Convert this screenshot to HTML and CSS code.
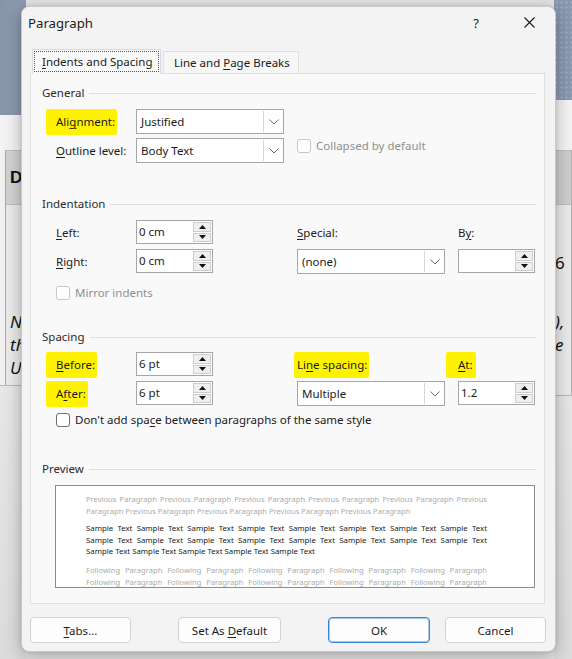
FILE: index.html
```html
<!DOCTYPE html>
<html>
<head>
<meta charset="utf-8">
<title>Paragraph</title>
<link rel="stylesheet" href="styles.css">
</head>
<body>
<div class="desk">
  <div class="strip strip-left">
    <div class="bg-top-l"></div>
    <div class="bg-light-l"></div>
    <div class="tbl-l">
      <div class="th-l">D</div>
      <div class="td-l"><span class="it">N</span><span class="it">th</span><span class="it">U</span></div>
    </div>
    <div class="bg-bottom"></div>
  </div>
  <div class="strip strip-right">
    <div class="bg-top-r"></div>
    <div class="bg-light-r"></div>
    <div class="tbl-r">
      <div class="th-r"></div>
      <div class="td-r"><span class="num">6</span><span class="it it-gap">),</span><span class="it">e</span></div>
    </div>
    <div class="bg-bottom"></div>
  </div>
</div>

<div class="dialog">
  <div class="titlebar">
    <span class="title">Paragraph</span>
    <span class="help">?</span>
    <span class="close"><svg width="11" height="11" viewBox="0 0 11 11"><path d="M0.5 0.5L10.5 10.5M10.5 0.5L0.5 10.5" stroke="#1b1b1b" stroke-width="1.1" fill="none"/></svg></span>
  </div>

  <div class="tabs">
    <div class="tab tab-active"><span class="focus"><span><u>I</u>ndents and Spacing</span></span></div>
    <div class="tab tab-inactive"><span>Line and <u>P</u>age Breaks</span></div>
  </div>

  <div class="panel">
    <div class="legend">General</div>
    <div class="grid grid-general">
      <div class="lbl"><span class="hl hl-align">Ali<u>g</u>nment:</span></div>
      <div class="select"><span class="sel-val">Justified</span><span class="sel-btn"><svg width="10" height="6" viewBox="0 0 10 6"><path d="M0.5 0.5L5 5L9.5 0.5" fill="none" stroke="#6b6b6b" stroke-width="1"/></svg></span></div>
      <div></div>
      <div></div>
      <div class="lbl"><u>O</u>utline level:</div>
      <div class="select"><span class="sel-val">Body Text</span><span class="sel-btn"><svg width="10" height="6" viewBox="0 0 10 6"><path d="M0.5 0.5L5 5L9.5 0.5" fill="none" stroke="#6b6b6b" stroke-width="1"/></svg></span></div>
      <div></div>
      <div class="check disabled"><span class="box"></span><span>Collapsed by default</span></div>
    </div>

    <div class="legend legend-gap">Indentation</div>
    <div class="grid grid-six">
      <div class="lbl"><u>L</u>eft:</div>
      <div class="spin"><span class="spin-val">0 cm</span><span class="spin-btns"><span class="spin-btn"><svg width="7" height="4" viewBox="0 0 7 4"><path d="M3.5 0L7 4H0z" fill="#111"/></svg></span><span class="spin-btn"><svg width="7" height="4" viewBox="0 0 7 4"><path d="M0 0H7L3.5 4z" fill="#111"/></svg></span></span></div>
      <div></div>
      <div class="lbl"><u>S</u>pecial:</div>
      <div></div>
      <div class="lbl">B<u>y</u>:</div>

      <div class="lbl"><u>R</u>ight:</div>
      <div class="spin"><span class="spin-val">0 cm</span><span class="spin-btns"><span class="spin-btn"><svg width="7" height="4" viewBox="0 0 7 4"><path d="M3.5 0L7 4H0z" fill="#111"/></svg></span><span class="spin-btn"><svg width="7" height="4" viewBox="0 0 7 4"><path d="M0 0H7L3.5 4z" fill="#111"/></svg></span></span></div>
      <div></div>
      <div class="select"><span class="sel-val">(none)</span><span class="sel-btn"><svg width="10" height="6" viewBox="0 0 10 6"><path d="M0.5 0.5L5 5L9.5 0.5" fill="none" stroke="#6b6b6b" stroke-width="1"/></svg></span></div>
      <div></div>
      <div class="spin"><span class="spin-val"></span><span class="spin-btns"><span class="spin-btn"><svg width="7" height="4" viewBox="0 0 7 4"><path d="M3.5 0L7 4H0z" fill="#111"/></svg></span><span class="spin-btn"><svg width="7" height="4" viewBox="0 0 7 4"><path d="M0 0H7L3.5 4z" fill="#111"/></svg></span></span></div>
    </div>
    <div class="check disabled row-mirror"><span class="box"></span><span>Mirror indents</span></div>

    <div class="legend legend-gap2">Spacing</div>
    <div class="grid grid-six grid-spacing">
      <div class="lbl"><span class="hl hl-before"><u>B</u>efore:</span></div>
      <div class="spin"><span class="spin-val">6 pt</span><span class="spin-btns"><span class="spin-btn"><svg width="7" height="4" viewBox="0 0 7 4"><path d="M3.5 0L7 4H0z" fill="#111"/></svg></span><span class="spin-btn"><svg width="7" height="4" viewBox="0 0 7 4"><path d="M0 0H7L3.5 4z" fill="#111"/></svg></span></span></div>
      <div></div>
      <div class="lbl"><span class="hl hl-line">Li<u>n</u>e spacing:</span></div>
      <div></div>
      <div class="lbl"><span class="hl hl-at"><u>A</u>t:</span></div>

      <div class="lbl"><span class="hl hl-after">A<u>f</u>ter:</span></div>
      <div class="spin"><span class="spin-val">6 pt</span><span class="spin-btns"><span class="spin-btn"><svg width="7" height="4" viewBox="0 0 7 4"><path d="M3.5 0L7 4H0z" fill="#111"/></svg></span><span class="spin-btn"><svg width="7" height="4" viewBox="0 0 7 4"><path d="M0 0H7L3.5 4z" fill="#111"/></svg></span></span></div>
      <div></div>
      <div class="select"><span class="sel-val">Multiple</span><span class="sel-btn"><svg width="10" height="6" viewBox="0 0 10 6"><path d="M0.5 0.5L5 5L9.5 0.5" fill="none" stroke="#6b6b6b" stroke-width="1"/></svg></span></div>
      <div></div>
      <div class="spin"><span class="spin-val">1.2</span><span class="spin-btns"><span class="spin-btn"><svg width="7" height="4" viewBox="0 0 7 4"><path d="M3.5 0L7 4H0z" fill="#111"/></svg></span><span class="spin-btn"><svg width="7" height="4" viewBox="0 0 7 4"><path d="M0 0H7L3.5 4z" fill="#111"/></svg></span></span></div>
    </div>
    <div class="check row-dont"><span class="box"></span><span>Don't add spa<u>c</u>e between paragraphs of the same style</span></div>

    <div class="legend legend-gap">Preview</div>
    <div class="preview">
      <div class="pv pv-prev">
        <div class="pl j">Previous Paragraph Previous Paragraph Previous Paragraph Previous Paragraph Previous Paragraph Previous</div>
        <div class="pl">Paragraph Previous Paragraph Previous Paragraph Previous Paragraph Previous Paragraph</div>
      </div>
      <div class="pv pv-sample">
        <div class="pl j">Sample Text Sample Text Sample Text Sample Text Sample Text Sample Text Sample Text Sample Text</div>
        <div class="pl j">Sample Text Sample Text Sample Text Sample Text Sample Text Sample Text Sample Text Sample Text</div>
        <div class="pl">Sample Text Sample Text Sample Text Sample Text Sample Text</div>
      </div>
      <div class="pv pv-follow">
        <div class="pl j">Following Paragraph Following Paragraph Following Paragraph Following Paragraph Following Paragraph</div>
        <div class="pl j">Following Paragraph Following Paragraph Following Paragraph Following Paragraph Following Paragraph</div>
      </div>
    </div>
  </div>

  <div class="buttons">
    <div class="btn btn-tabs"><span><u>T</u>abs...</span></div>
    <div class="btn btn-default"><span>Set As <u>D</u>efault</span></div>
    <div class="btn btn-ok"><span>OK</span></div>
    <div class="btn btn-cancel"><span>Cancel</span></div>
  </div>
</div>
</body>
</html>
```

FILE: styles.css
```css
* { box-sizing: border-box; }
html, body { margin: 0; padding: 0; }
body {
  width: 572px;
  height: 659px;
  overflow: hidden;
  position: relative;
  background: #e3e3e3;
  font-family: "Noto Sans", "Open Sans", sans-serif;
  font-size: 11.5px;
  color: #1b1b1b;
}
u { text-decoration-thickness: 1px; text-underline-offset: 1.5px; }

/* ---------- background document ---------- */
.desk { display: flex; justify-content: space-between; height: 659px; }
.strip { display: flex; flex-direction: column; height: 100%; }
.strip-left { width: 26px; background: #f1f1f1; }
.strip-right { width: 18px; background: #f1f1f1; }
.bg-top-l { height: 115px; background: linear-gradient(90deg, #8795ab, #8f9bb0); }
.bg-light-l { height: 35px; background: #f3f3f3; }
.tbl-l { margin-left: 5px; border-left: 1px solid #a9a9a9; }
.th-l {
  height: 55px; background: #d3d3d3;
  border-top: 1px solid #bcbcbc; border-bottom: 1px solid #bcbcbc;
  padding-left: 4px;
  font: bold 17px/53px "Liberation Sans", sans-serif; color: #111;
}
.td-l {
  height: 180px; background: #ebebeb;
  padding-top: 105px; padding-left: 4px;
  display: flex; flex-direction: column;
}
.it { font: italic 17px/23px "Noto Sans", sans-serif; color: #111; }
.bg-bottom { flex: 1; background: linear-gradient(#e7e7e7, #dcdcdc); border-top: 1px solid #b8b8b8; }

.bg-top-r {
  height: 100px;
  background-color: #8a97af;
  background-image: radial-gradient(circle, rgba(170, 190, 220, 0.55) 0.8px, transparent 1.3px);
  background-size: 5px 5px;
}
.bg-light-r { height: 50px; background: #f4f4f4; }
.tbl-r { border-right: 1px solid #b0b0b0; }
.th-r { height: 55px; background: #cecece; border-top: 1px solid #bcbcbc; border-bottom: 1px solid #bcbcbc; }
.td-r {
  height: 190px; background: #ebebeb;
  padding-top: 46px; padding-left: 1px;
  display: flex; flex-direction: column;
}
.num { font: 17px/23px "Noto Sans", sans-serif; color: #111; }
.it-gap { margin-top: 36px; }

/* ---------- dialog ---------- */
.dialog {
  position: absolute;
  left: 21px; top: 6px;
  width: 535px; height: 646px;
  background: #f3f3f3;
  border: 1px solid #c9c9c9;
  border-radius: 8px;
  box-shadow: 0 4px 18px rgba(0, 0, 0, 0.28), 0 0 3px rgba(0, 0, 0, 0.12);
  display: flex; flex-direction: column;
}
.titlebar {
  height: 31px; flex-shrink: 0;
  display: flex; align-items: center;
  padding-left: 6px; padding-right: 16px;
}
.title { font-size: 13.2px; color: #1b1b1b; }
.help { margin-left: auto; width: 20px; text-align: center; font-size: 13px; }
.close { width: 20px; margin-left: 33px; display: flex; justify-content: center; }

.tabs { display: flex; align-items: flex-end; margin-top: 11px; margin-left: 10px; height: 24px; position: relative; z-index: 2; }
.tab { display: flex; align-items: center; white-space: nowrap; }
.tab-active {
  width: 129px; height: 25px; margin-bottom: -1px;
  background: #f9f9f9;
  border: 1px solid #d9d9d9; border-bottom: none;
  padding: 1px 1px 2px 1px;
}
.focus {
  flex: 1; height: 100%;
  border: 1px dotted #555;
  padding-left: 7px;
  display: flex; align-items: center;
}
.tab-inactive {
  width: 136px; height: 22px; margin-left: 2px;
  background: #f6f6f6;
  border: 1px solid #dedede; border-bottom: none;
  padding-left: 10px;
}

.panel {
  margin-left: 8px;
  width: 515px; height: 531px; flex-shrink: 0;
  background: #f9f9f9;
  border: 1px solid #e0e0e0;
  padding: 11px 8px 0 11px;
  display: flex; flex-direction: column;
}
.legend {
  height: 16px; line-height: 16px;
  display: flex; align-items: center;
  color: #2b2b2b;
}
.legend::after { content: ""; flex: 1; height: 1px; background: #dedede; margin-left: 5px; }
.legend-gap { margin-top: 33px; }
.legend-gap2 { margin-top: 28px; }

.grid { display: grid; grid-auto-rows: 25px; row-gap: 4px; padding-left: 14px; margin-top: 8px; }
.grid-general { grid-template-columns: 80px 148px 13px 1fr; }
.grid-six { grid-template-columns: 80px 77px 84px 148px 13px 77px; }
.grid-spacing { margin-top: 7px; }
.lbl { line-height: 25px; white-space: nowrap; }
.hl {
  display: inline-block;
  background: #fff200;
  line-height: 26px;
  margin-left: -10px; padding-left: 10px; padding-right: 2px;
  border-radius: 2px;
}
.hl-line { margin-left: -3px; padding-left: 3px; padding-right: 2px; }
.hl-at { margin-left: -12px; padding-left: 12px; padding-right: 3px; }

.select {
  width: 148px; height: 25px;
  background: #fff;
  border: 1px solid #a6a6a6;
  display: flex;
}
.sel-val { flex: 1; padding-left: 4px; line-height: 23px; }
.sel-btn {
  width: 20px; margin: 1px 0;
  border-left: 1px solid #d6d6d6;
  display: flex; align-items: center; justify-content: center;
}

.spin {
  width: 77px; height: 24px;
  background: #fff;
  border: 1px solid #a6a6a6;
  display: flex;
}
.spin-val { flex: 1; padding-left: 2px; line-height: 22px; }
.spin-btns { width: 19px; display: flex; flex-direction: column; padding: 1px 1px 1px 0; gap: 1px; }
.spin-btn {
  flex: 1;
  background: #efefef;
  border: 1px solid #cdcdcd;
  display: flex; align-items: center; justify-content: center;
}

.check { display: flex; align-items: center; gap: 5px; height: 16px; line-height: 16px; white-space: nowrap; }
.box {
  width: 14px; height: 14px; flex-shrink: 0;
  border: 1px solid #6f6f6f; border-radius: 3px;
  background: #fff;
}
.disabled { color: #8f8f8f; }
.disabled .box { border-color: #c7c7c7; }
.row-mirror { margin-top: 11px; padding-left: 14px; }
.row-dont { margin-top: 6px; padding-left: 14px; }

.preview {
  margin-top: 8px; margin-left: 13px;
  width: 480px; height: 103px;
  background: #fff;
  border: 1px solid #8c8c8c;
  padding: 7px 0 0 30px;
  overflow: hidden;
}
.pl { width: 401px; }
.j { text-align: justify; text-align-last: justify; }
.pv-prev, .pv-follow { font-size: 7.6px; line-height: 12px; color: #ababab; }
.pv-sample { font-size: 7.8px; line-height: 11.7px; color: #222; margin-top: 6px; }
.pv-follow { margin-top: 6px; }

.buttons { display: flex; margin-top: 13px; margin-left: 8px; }
.btn {
  height: 26px;
  background: #fdfdfd;
  border: 1px solid #d2d2d2;
  border-radius: 4px;
  display: flex; align-items: center; justify-content: center;
  white-space: nowrap;
}
.btn-tabs { width: 101px; }
.btn-default { width: 103px; margin-left: 47px; }
.btn-ok { width: 102px; margin-left: 47px; border-color: #3d86d6; box-shadow: inset 0 0 0 1px rgba(61, 134, 214, 0.45); }
.btn-cancel { width: 101px; margin-left: 15px; }
```
